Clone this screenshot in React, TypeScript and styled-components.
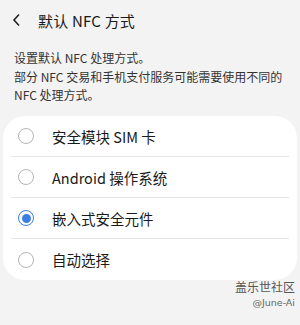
import React, { useState } from "react";
import styled, { createGlobalStyle } from "styled-components";

const GlobalStyle = createGlobalStyle`
  html, body {
    margin: 0;
    padding: 0;
    background: #f3f3f3;
  }
  body {
    font-family: "Noto Sans CJK SC", "Noto Sans", Roboto, sans-serif;
    color: #1a1a1a;
  }
`;

const options = ["安全模块 SIM 卡", "Android 操作系统", "嵌入式安全元件", "自动选择"];

const App = () => {
  const [selected, setSelected] = useState(2);

  return (
    <>
      <GlobalStyle />
      <Page>
        <Header>
          <Back>
            <svg width="10" height="14" viewBox="0 0 10 14">
              <path d="M7 1.5 L2 7 L7 12.5" fill="none" stroke="#222" strokeWidth="1.6" />
            </svg>
          </Back>
          <Title>默认 NFC 方式</Title>
        </Header>
        <Description>
          设置默认 NFC 处理方式。
          <br />
          部分 NFC 交易和手机支付服务可能需要使用不同的
          <br />
          NFC 处理方式。
        </Description>
        <Card>
          {options.map((opt, i) => (
            <Row key={opt} last={i === options.length - 1} onClick={() => setSelected(i)}>
              <Radio checked={selected === i} />
              <Label>{opt}</Label>
            </Row>
          ))}
        </Card>
        <Watermark>
          <Brand>盖乐世社区</Brand>
          <Handle>@June-Ai</Handle>
        </Watermark>
      </Page>
    </>
  );
};

export default App;

const Page = styled.div`
  width: 300px;
  height: 325px;
  overflow: hidden;
  background: #f3f3f3;
  display: flex;
  flex-direction: column;
`;

const Header = styled.div`
  height: 40px;
  display: flex;
  align-items: center;
  padding-left: 12px;
`;

const Back = styled.div`
  width: 14px;
  display: flex;
  align-items: center;
  margin-right: 12px;
`;

const Title = styled.div`
  font-size: 15px;
  color: #1a1a1a;
  letter-spacing: 0.2px;
`;

const Description = styled.div`
  padding: 9px 14px 0 14px;
  font-size: 12px;
  line-height: 18.5px;
  color: #333;
  height: 67px;
`;

const Card = styled.div`
  margin: 0 3px;
  background: #fff;
  border-radius: 22px;
  padding: 0 8px;
`;

const Row = styled.div<{ last?: boolean }>`
  height: 41px;
  display: flex;
  align-items: center;
  border-bottom: ${(p) => (p.last ? "none" : "1px solid #e6e6e6")};
  box-sizing: border-box;
  cursor: pointer;
`;

const Radio = styled.span<{ checked: boolean }>`
  width: 16px;
  height: 16px;
  box-sizing: border-box;
  border-radius: 50%;
  margin-left: 7px;
  margin-right: 18px;
  border: 1.5px solid ${(p) => (p.checked ? "#3d7fe0" : "#b4b4b4")};
  display: flex;
  align-items: center;
  justify-content: center;
  &::after {
    content: "";
    width: 9px;
    height: 9px;
    border-radius: 50%;
    background: ${(p) => (p.checked ? "#3d7fe0" : "transparent")};
  }
`;

const Label = styled.div`
  font-size: 14.5px;
  color: #1a1a1a;
`;

const Watermark = styled.div`
  display: flex;
  flex-direction: column;
  align-items: flex-end;
  padding: 1px 5px 0 0;
  line-height: 1;
`;

const Brand = styled.div`
  font-size: 12px;
  color: #555;
`;

const Handle = styled.div`
  margin-top: 5px;
  font-size: 9.5px;
  color: #666;
  font-family: "DejaVu Sans", sans-serif;
`;
